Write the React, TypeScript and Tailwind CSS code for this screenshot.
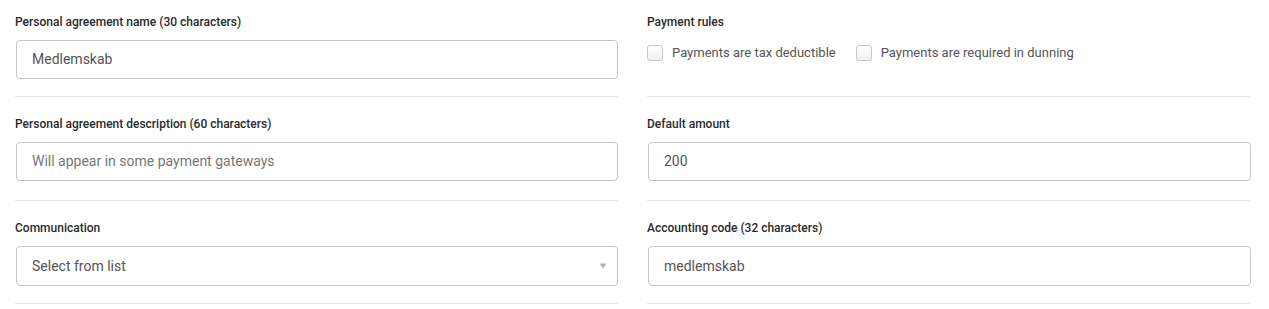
import React from "react";

const font = { fontFamily: "Roboto, 'Noto Sans', Arial, sans-serif" };

function Label({ children }: { children: React.ReactNode }) {
  return <div className="h-[18px] text-[12px] leading-[18px] font-medium text-[#2a2a2a]">{children}</div>;
}

function TextInput({ value, placeholder, h = "h-[39px]" }: { value?: string; placeholder?: string; h?: string }) {
  return (
    <div className={`ml-px ${h} rounded-[4px] border border-[#c4c4c4] bg-white flex items-center px-[15px] text-[14px]`}>
      {value ? <span className="text-[#555]">{value}</span> : <span className="text-[#777]">{placeholder}</span>}
    </div>
  );
}

function Divider() {
  return <div className="h-px bg-[#e6e6e6] w-[603px]" />;
}

function Checkbox({ label }: { label: string }) {
  return (
    <div className="flex items-center">
      <div className="w-4 h-4 rounded-[3px] border border-[#c8c8c8] bg-gradient-to-b from-white to-[#f1f1f1]" />
      <span className="ml-[9px] text-[13px] text-[#555]">{label}</span>
    </div>
  );
}

export default function App() {
  return (
    <div className="w-[1269px] h-[309px] bg-white pl-[15px]" style={font}>
      {/* Row 1 */}
      <div className="grid grid-cols-[603px_604px] gap-x-[29px]">
        <div className="flex flex-col pt-[13px]">
          <Label>Personal agreement name (30 characters)</Label>
          <div className="mt-[9px]">
            <TextInput value="Medlemskab" />
          </div>
          <div className="mt-[17px]">
            <Divider />
          </div>
        </div>
        <div className="flex flex-col pt-[13px]">
          <Label>Payment rules</Label>
          <div className="mt-[14px] flex items-center gap-[20px] h-4">
            <Checkbox label="Payments are tax deductible" />
            <Checkbox label="Payments are required in dunning" />
          </div>
          <div className="mt-auto">
            <Divider />
          </div>
        </div>
      </div>
      {/* Row 2 */}
      <div className="grid grid-cols-[603px_604px] gap-x-[29px]">
        <div className="flex flex-col pt-[18px]">
          <Label>Personal agreement description (60 characters)</Label>
          <div className="mt-[9px]">
            <TextInput placeholder="Will appear in some payment gateways" />
          </div>
          <div className="mt-[19px]">
            <Divider />
          </div>
        </div>
        <div className="flex flex-col pt-[18px]">
          <Label>Default amount</Label>
          <div className="mt-[9px]">
            <TextInput value="200" />
          </div>
          <div className="mt-[19px]">
            <Divider />
          </div>
        </div>
      </div>
      {/* Row 3 */}
      <div className="grid grid-cols-[603px_604px] gap-x-[29px]">
        <div className="flex flex-col pt-[18px]">
          <Label>Communication</Label>
          <div className="mt-[9px]">
            <div className="ml-px h-[40px] rounded-[4px] border border-[#c4c4c4] bg-white flex items-center justify-between pl-[15px] pr-[10px] text-[14px]">
              <span className="text-[#555]">Select from list</span>
              <svg width="8" height="6" viewBox="0 0 8 6" className="-mt-px">
                <path d="M0.5 0.5 L7.5 0.5 L4 5.5 Z" fill="#b0b0b0" />
              </svg>
            </div>
          </div>
          <div className="mt-[17px]">
            <Divider />
          </div>
        </div>
        <div className="flex flex-col pt-[18px]">
          <Label>Accounting code (32 characters)</Label>
          <div className="mt-[9px]">
            <TextInput value="medlemskab" h="h-[40px]" />
          </div>
          <div className="mt-[17px]">
            <Divider />
          </div>
        </div>
      </div>
    </div>
  );
}
